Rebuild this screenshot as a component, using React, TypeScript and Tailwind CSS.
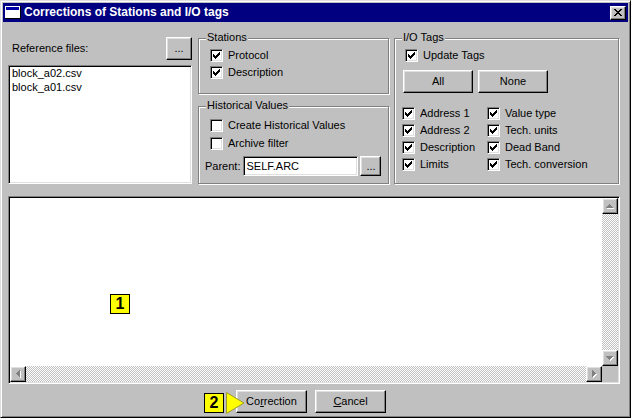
import type { ReactNode } from "react";

const raised =
  "bg-[#c0c0c0] border border-t-white border-l-white border-r-black border-b-black shadow-[inset_-1px_-1px_0_#808080,inset_1px_1px_0_#dfdfdf]";
const sunken =
  "border border-t-[#808080] border-l-[#808080] border-r-white border-b-white shadow-[inset_1px_1px_0_#000,inset_-1px_-1px_0_#dfdfdf]";
const dither =
  "bg-[repeating-conic-gradient(#c0c0c0_0%_25%,#ffffff_0%_50%)] bg-[length:2px_2px]";

const CHECK =
  "M6 0h1v1h-1z M5 1h2v1h-2z M0 2h1v1h-1z M4 2h3v1h-3z M0 3h2v1h-2z M3 3h3v1h-3z M0 4h5v1h-5z M1 5h3v1h-3z M2 6h1v1h-1z";

const ARROWS = {
  up: { w: 7, h: 4, d: "M3 0h1v1h-1z M2 1h3v1h-3z M1 2h5v1h-5z M0 3h7v1h-7z" },
  down: { w: 7, h: 4, d: "M0 0h7v1h-7z M1 1h5v1h-5z M2 2h3v1h-3z M3 3h1v1h-1z" },
  left: { w: 4, h: 7, d: "M0 3h1v1h-1z M1 2h1v3h-1z M2 1h1v5h-1z M3 0h1v7h-1z" },
  right: { w: 4, h: 7, d: "M0 0h1v7h-1z M1 1h1v5h-1z M2 2h1v3h-1z M3 3h1v1h-1z" },
};

function CheckBox({ checked = true }: { checked?: boolean }) {
  return (
    <span
      className={`w-[13px] h-[13px] shrink-0 bg-white flex items-center justify-center ${sunken}`}
    >
      {checked && (
        <svg width="7" height="7" viewBox="0 0 7 7" shapeRendering="crispEdges">
          <path d={CHECK} fill="#000" />
        </svg>
      )}
    </span>
  );
}

function Check({ label, checked = true }: { label: string; checked?: boolean }) {
  return (
    <div className="flex items-center h-[17px]">
      <CheckBox checked={checked} />
      <span className="ml-[5px] whitespace-nowrap">{label}</span>
    </div>
  );
}

function Group({ title, className, children }: { title: string; className: string; children: ReactNode }) {
  return (
    <div
      className={`relative border border-[#808080] shadow-[inset_1px_1px_0_#fff,1px_1px_0_#fff] ${className}`}
    >
      <span className="absolute -top-[8px] left-[7px] px-[1px] bg-[#c0c0c0] leading-[13px] whitespace-nowrap">
        {title}
      </span>
      {children}
    </div>
  );
}

function ScrollBtn({ dir }: { dir: keyof typeof ARROWS }) {
  const a = ARROWS[dir];
  return (
    <div className={`w-[16px] h-[16px] shrink-0 flex items-center justify-center ${raised}`}>
      <svg width={a.w + 1} height={a.h + 1} viewBox={`0 0 ${a.w + 1} ${a.h + 1}`} shapeRendering="crispEdges">
        <path d={a.d} fill="#fff" transform="translate(1 1)" />
        <path d={a.d} fill="#808080" />
      </svg>
    </div>
  );
}

export default function App() {
  return (
    <div className="w-[642px] h-[420px] bg-white font-['Liberation_Sans',Arial,sans-serif] text-[11px] leading-[13px] text-black">
      <div className="w-[631px] h-[418px] bg-[#c0c0c0] border border-t-[#dfdfdf] border-l-[#dfdfdf] border-r-black border-b-black shadow-[inset_1px_1px_0_#fff,inset_-1px_-1px_0_#808080] p-[2px] flex flex-col">
        {/* Title bar */}
        <div className="h-[19px] shrink-0 bg-[#000080] flex items-center px-[2px]">
          <svg width="16" height="13" viewBox="0 0 16 13" shapeRendering="crispEdges">
            <rect x="0" y="0" width="16" height="13" fill="#000" />
            <rect x="0" y="0" width="15" height="12" fill="#fff" />
            <rect x="1" y="1" width="13" height="10" fill="#fff" />
            <rect x="1" y="1" width="13" height="3" fill="#0000a8" />
          </svg>
          <span className="ml-[3px] text-white font-bold text-[12px] whitespace-nowrap">
            Corrections of Stations and I/O tags
          </span>
          <div className={`ml-auto w-[16px] h-[14px] flex items-center justify-center ${raised}`}>
            <svg width="8" height="7" viewBox="0 0 8 7" shapeRendering="crispEdges">
              <path
                d="M0 0h2v1h-2z M6 0h2v1h-2z M1 1h2v1h-2z M5 1h2v1h-2z M2 2h4v1h-4z M3 3h2v1h-2z M2 4h4v1h-4z M1 5h2v1h-2z M5 5h2v1h-2z M0 6h2v1h-2z M6 6h2v1h-2z"
                fill="#000"
              />
            </svg>
          </div>
        </div>

        <div className="relative flex-1 px-[5px]">
          {/* Top row */}
          <div className="flex items-start mt-[15px]">
            {/* Reference files */}
            <div className="w-[184px] shrink-0">
              <div className="flex items-center justify-between h-[23px]">
                <span className="pl-[4px]">Reference files:</span>
                <div className={`w-[26px] h-[23px] flex items-center justify-center ${raised}`}>...</div>
              </div>
              <div className={`mt-[5px] h-[119px] bg-white pl-[3px] leading-[14px] ${sunken}`}>
                <div>block_a02.csv</div>
                <div>block_a01.csv</div>
              </div>
            </div>

            {/* Stations / Historical */}
            <div className="ml-[6px] w-[191px] shrink-0 mt-[1px]">
              <Group title="Stations" className="h-[56px] pt-[8px] pl-[11px]">
                <Check label="Protocol" />
                <Check label="Description" />
              </Group>
              <Group title="Historical Values" className="mt-[12px] h-[78px] pt-[10px] pl-[6px]">
                <div className="pl-[5px] flex flex-col gap-[1px]">
                  <Check label="Create Historical Values" checked={false} />
                  <Check label="Archive filter" checked={false} />
                </div>
                <div className="flex items-center mt-[4px]">
                  <span>Parent:</span>
                  <div className={`ml-[3px] w-[115px] h-[20px] bg-white pl-[2px] flex items-center ${sunken}`}>
                    SELF.ARC
                  </div>
                  <div className={`ml-[2px] w-[21px] h-[20px] flex items-center justify-center ${raised}`}>...</div>
                </div>
              </Group>
            </div>

            {/* I/O Tags */}
            <Group title="I/O Tags" className="ml-[5px] w-[225px] h-[146px] shrink-0 mt-[1px] pt-[8px]">
              <div className="pl-[10px]">
                <Check label="Update Tags" />
              </div>
              <div className="flex gap-[5px] mt-[6px] pl-[8px]">
                <div className={`w-[70px] h-[23px] flex items-center justify-center ${raised}`}>All</div>
                <div className={`w-[70px] h-[23px] flex items-center justify-center ${raised}`}>None</div>
              </div>
              <div className="grid grid-cols-[85px_1fr] mt-[12px] pl-[7px]">
                <Check label="Address 1" />
                <Check label="Value type" />
                <Check label="Address 2" />
                <Check label="Tech. units" />
                <Check label="Description" />
                <Check label="Dead Band" />
                <Check label="Limits" />
                <Check label="Tech. conversion" />
              </div>
            </Group>
          </div>

          {/* Output area */}
          <div className={`mt-[12px] w-[612px] h-[188px] bg-white flex flex-col p-[1px] ${sunken}`}>
            <div className="flex flex-1">
              <div className="relative flex-1 bg-white">
                <div className="absolute left-[100px] top-[96px] w-[20px] h-[20px] bg-[#ffff00] border border-black flex items-center justify-center font-bold text-[16px] leading-none">
                  1
                </div>
              </div>
              <div className="w-[16px] flex flex-col">
                <ScrollBtn dir="up" />
                <div className={`flex-1 ${dither}`} />
                <ScrollBtn dir="down" />
              </div>
            </div>
            <div className="flex h-[16px]">
              <ScrollBtn dir="left" />
              <div className={`flex-1 ${dither}`} />
              <ScrollBtn dir="right" />
              <div className="w-[16px] bg-[#c0c0c0]" />
            </div>
          </div>

          {/* Buttons */}
          <div className="flex gap-[8px] mt-[6px] pl-[228px]">
            <div className={`w-[71px] h-[23px] flex items-center justify-center ${raised}`}>
              <span>
                Co<u>r</u>rection
              </span>
            </div>
            <div className={`w-[71px] h-[23px] flex items-center justify-center ${raised}`}>
              <span>
                <u>C</u>ancel
              </span>
            </div>
          </div>

          {/* Annotation 2 */}
          <div className="absolute left-[201px] top-[371px] w-[20px] h-[20px] bg-[#ffff00] border border-black flex items-center justify-center font-bold text-[16px] leading-none">
            2
          </div>
          <svg className="absolute left-[223px] top-[370px]" width="19" height="22" viewBox="0 0 19 22">
            <polygon points="0.5,0.5 18,11 0.5,21.5" fill="#ffff00" stroke="#9a9a30" strokeWidth="1" />
          </svg>
        </div>
      </div>
    </div>
  );
}
